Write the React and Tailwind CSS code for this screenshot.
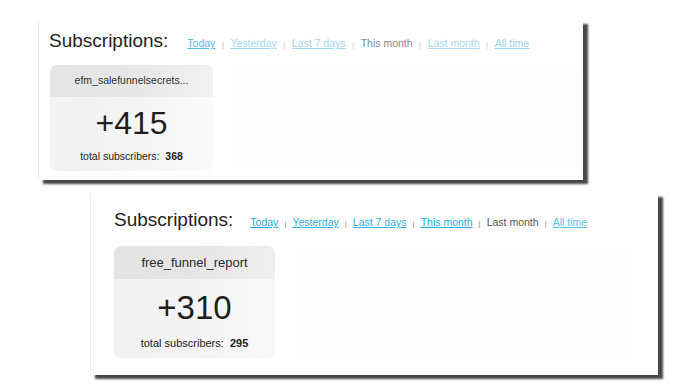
import React from "react";

const F = { fontFamily: '"Liberation Sans", Arial, sans-serif' };

function Sep({ c }) {
  return <span className={`text-[8px] ${c}`}>|</span>;
}

function Panel1() {
  return (
    <div className="ml-[38px] mt-[20px] w-[545px] h-[160px] bg-white border-l border-[#ececec] shadow-[5px_4px_2px_rgba(0,0,0,0.72)] pl-[10px] pt-[10px]">
      <div className="flex items-baseline h-[22px]">
        <span className="text-[19px] leading-[22px] text-[#222]">Subscriptions:</span>
        <div className="flex items-baseline gap-[6.5px] ml-[19px] text-[10.5px] leading-[22px]">
          <span className="text-[#56b9e6] underline">Today</span>
          <Sep c="text-[#bbb]" />
          <span className="text-[#9fd7f1] underline">Yesterday</span>
          <Sep c="text-[#ccc]" />
          <span className="text-[#9fd7f1] underline">Last 7 days</span>
          <Sep c="text-[#ccc]" />
          <span className="text-[#8c8684]">This month</span>
          <Sep c="text-[#ccc]" />
          <span className="text-[#a6dbf3] underline">Last month</span>
          <Sep c="text-[#ccc]" />
          <span className="text-[#96d3f0] underline">All time</span>
        </div>
      </div>
      <div className="flex mt-[13px] ml-[1px] gap-[20px]">
        <div className="w-[163px] h-[106px] rounded-[7px] overflow-hidden flex flex-col">
          <div className="h-[32px] bg-gradient-to-r from-[#e4e4e4] via-[#e7e7e7] to-[#f1f1f1] flex items-center justify-center text-[10.5px] text-[#333]">
            efm_salefunnelsecrets...
          </div>
          <div className="flex-1 bg-gradient-to-r from-[#f2f2f2] via-[#f4f4f4] to-[#fafafa] flex flex-col items-center pt-[10px]">
            <div className="text-[32px] leading-[32px] text-[#1e1e1e]">+415</div>
            <div className="mt-[11px] text-[10.5px] leading-[12px] text-[#222]">
              total subscribers:&nbsp; <b className="font-bold">368</b>
            </div>
          </div>
        </div>
        <div className="w-[346px] h-[106px] rounded-[7px] bg-[#fefefe]" />
      </div>
    </div>
  );
}

function Panel2() {
  return (
    <div className="ml-[90px] mt-[13px] w-[568px] h-[182px] bg-white border-l border-[#ececec] shadow-[5px_4px_2px_rgba(0,0,0,0.72)] pl-[23px] pt-[16px]">
      <div className="flex items-baseline h-[22px]">
        <span className="text-[19px] leading-[22px] text-[#222]">Subscriptions:</span>
        <div className="flex items-baseline gap-[6px] ml-[17px] text-[10.5px] leading-[22px]">
          <span className="text-[#1ea6e0] underline">Today</span>
          <Sep c="text-[#888]" />
          <span className="text-[#35b0e6] underline">Yesterday</span>
          <Sep c="text-[#888]" />
          <span className="text-[#35b0e6] underline">Last 7 days</span>
          <Sep c="text-[#888]" />
          <span className="text-[#2aaae2] underline">This month</span>
          <Sep c="text-[#888]" />
          <span className="text-[#555]">Last month</span>
          <Sep c="text-[#999]" />
          <span className="text-[#5cc0ea] underline">All time</span>
        </div>
      </div>
      <div className="flex mt-[15px] gap-[21px]">
        <div className="w-[161px] h-[112px] rounded-[7px] overflow-hidden flex flex-col">
          <div className="h-[33px] bg-gradient-to-r from-[#e3e3e3] via-[#e6e6e6] to-[#efefef] flex items-center justify-center text-[13px] text-[#2a2a2a]">
            free_funnel_report
          </div>
          <div className="flex-1 bg-gradient-to-r from-[#f1f1f1] via-[#f3f3f3] to-[#f9f9f9] flex flex-col items-center pt-[12px]">
            <div className="text-[33px] leading-[33px] text-[#1e1e1e]">+310</div>
            <div className="mt-[13px] text-[11px] leading-[12px] text-[#222]">
              total subscribers:&nbsp; <b className="font-bold">295</b>
            </div>
          </div>
        </div>
        <div className="w-[338px] h-[112px] rounded-[7px] bg-[#fefefe]" />
      </div>
    </div>
  );
}

export default function App() {
  return (
    <div className="w-[700px] h-[387px] bg-white overflow-hidden flex flex-col" style={F}>
      <Panel1 />
      <Panel2 />
    </div>
  );
}
